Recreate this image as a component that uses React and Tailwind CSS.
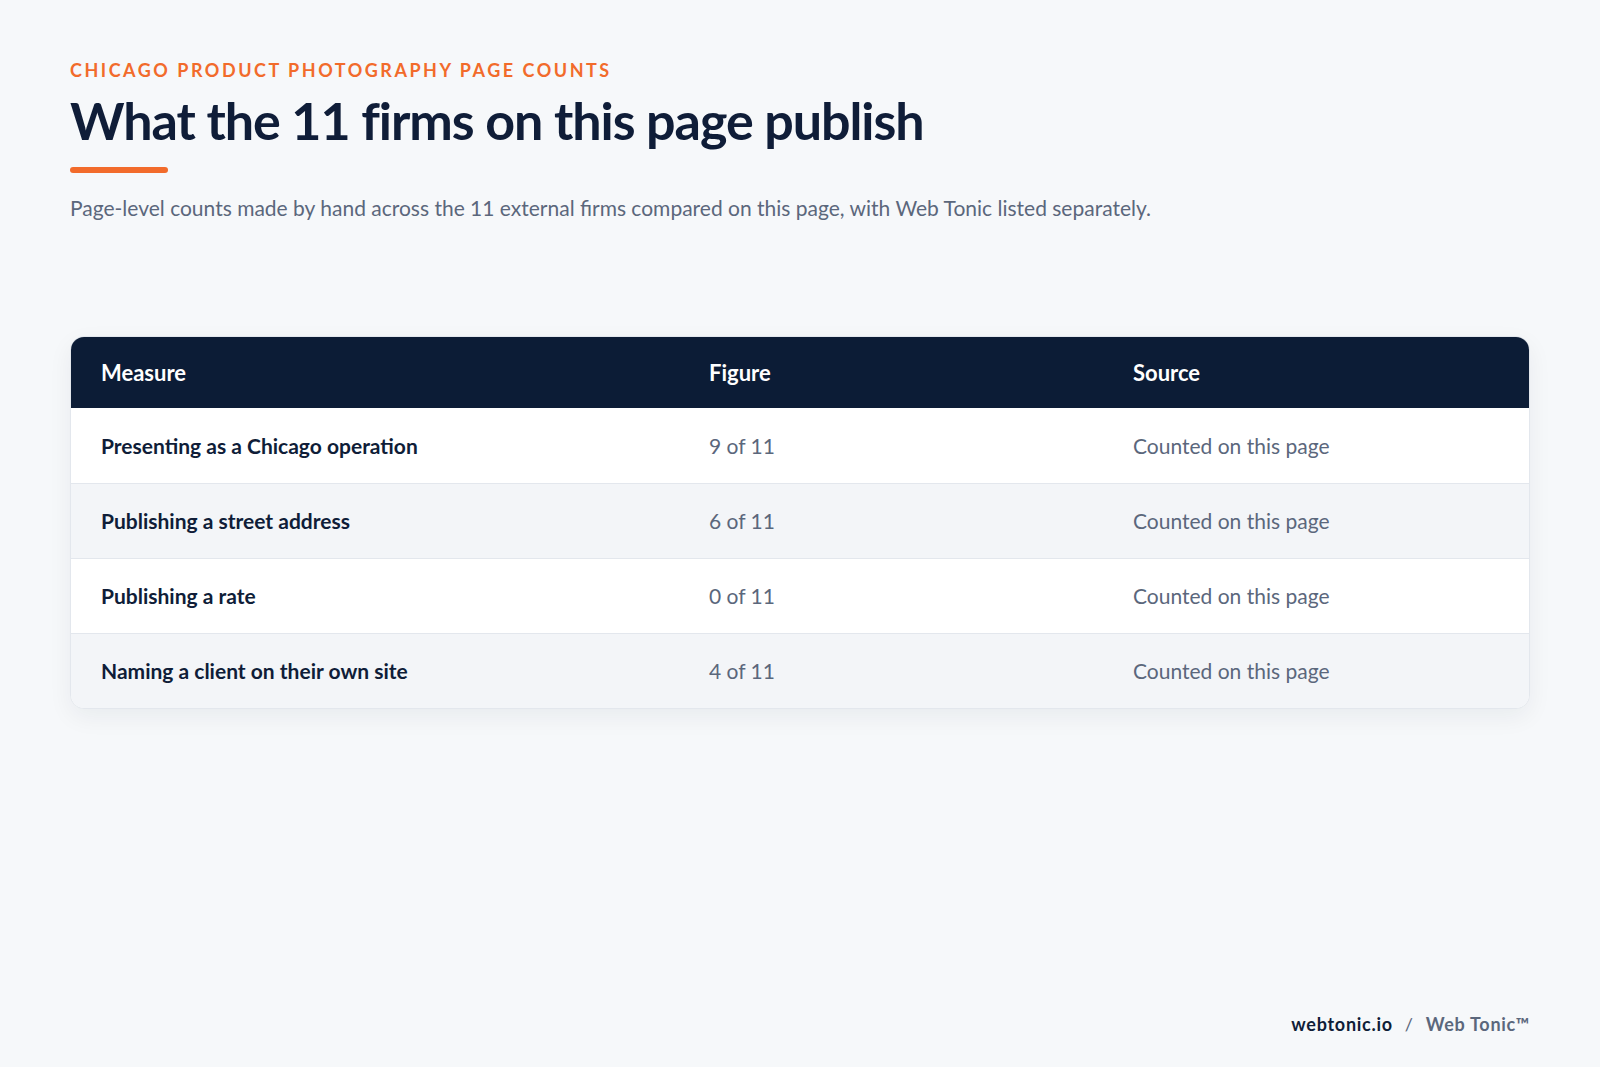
const rows = [
  { measure: "Presenting as a Chicago operation", figure: "9 of 11", source: "Counted on this page" },
  { measure: "Publishing a street address", figure: "6 of 11", source: "Counted on this page" },
  { measure: "Publishing a rate", figure: "0 of 11", source: "Counted on this page" },
  { measure: "Naming a client on their own site", figure: "4 of 11", source: "Counted on this page" },
];

function App() {
  return (
    <div className="flex h-[1067px] w-full flex-col bg-[#f6f8fa] px-[70px] pt-[58px] pb-[31px] font-['Lato','Liberation_Sans',sans-serif]">
      <p className="text-[18px] font-bold uppercase leading-[24px] tracking-[0.14em] text-[#f26b2b]">
        Chicago product photography page counts
      </p>
      <h1 className="mt-2 text-[52px] font-bold leading-[60px] tracking-[-0.02em] text-[#0f1d38]">
        What the 11 firms on this page publish
      </h1>
      <div className="mt-[17px] h-[6px] w-[98px] rounded-full bg-[#f26b2b]" />
      <p className="mt-5 text-[21px] leading-[30px] text-[#5b677c]">
        Page-level counts made by hand across the 11 external firms compared on this page, with Web Tonic listed
        separately.
      </p>

      <div className="mt-[113px] overflow-hidden rounded-[14px] border border-[#e3e7ed] bg-white shadow-[0_8px_24px_rgba(15,29,56,0.06)]">
        <div className="grid h-[71px] grid-cols-[608px_424px_1fr] items-center bg-[#0c1c36] text-[22px] font-bold text-white">
          <div className="px-[30px]">Measure</div>
          <div className="px-[30px]">Figure</div>
          <div className="px-[30px]">Source</div>
        </div>
        {rows.map((row, i) => (
          <div
            key={row.measure}
            className={
              "grid h-[75px] grid-cols-[608px_424px_1fr] items-center text-[21px] " +
              (i > 0 ? "border-t border-[#e3e7ed] " : "") +
              (i % 2 === 1 ? "bg-[#f3f5f8]" : "bg-white")
            }
          >
            <div className="px-[30px] font-bold text-[#0f1d38]">{row.measure}</div>
            <div className="px-[30px] text-[#5b677c]">{row.figure}</div>
            <div className="px-[30px] text-[#5b677c]">{row.source}</div>
          </div>
        ))}
      </div>

      <div className="mt-auto flex justify-end text-[18px] font-bold leading-[24px] tracking-[0.04em]">
        <span className="text-[#0f1d38]">webtonic.io</span>
        <span className="mx-3 font-normal text-[#5b677c]">/</span>
        <span className="text-[#5b677c]">Web Tonic™</span>
      </div>
    </div>
  );
}

export default App;
